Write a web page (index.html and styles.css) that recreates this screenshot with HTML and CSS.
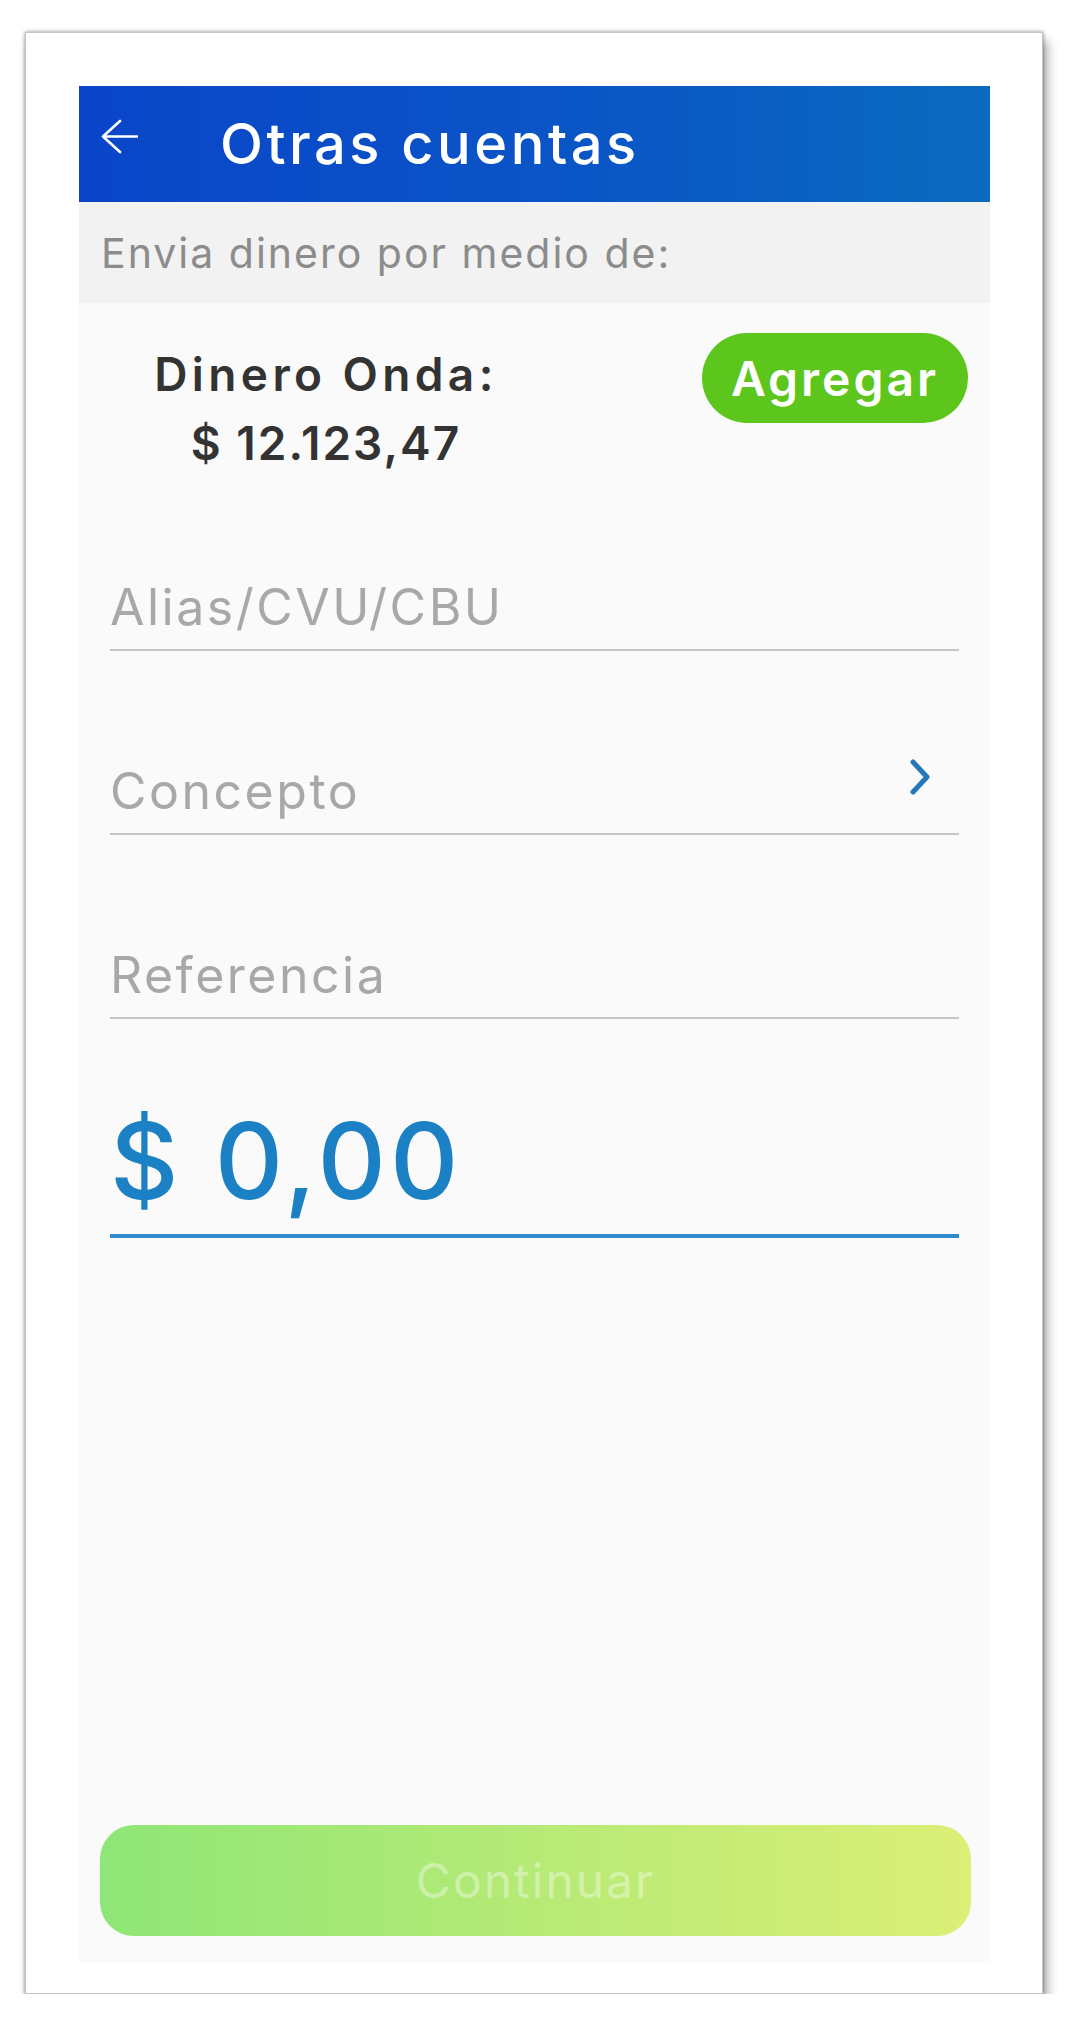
FILE: index.html
```html
<!doctype html>
<html>
<head>
    <meta charset="UTF-8">
    <title>Otras cuentas</title>
    <link rel="stylesheet" href="styles.css">
</head>

<body>
<div class="card">
    <div class="screen">
        <div class="topbar">
            <svg class="back" width="38" height="38" viewBox="0 0 38 38">
                <path d="M37 18.5 H3 M20 3 L3 18.5 L20 34" fill="none" stroke="#fff" stroke-width="2.6" stroke-linecap="round" stroke-linejoin="round"/>
            </svg>
            <h1 class="title">Otras cuentas</h1>
        </div>

        <div class="subtitle">Envia dinero por medio de:</div>

        <div class="balance-row">
            <div class="balance">
                <div class="balance-label">Dinero Onda:</div>
                <div class="balance-value">$ 12.123,47</div>
            </div>
            <button class="add" type="button">Agregar</button>
        </div>

        <div class="field">
            <span class="placeholder">Alias/CVU/CBU</span>
        </div>
        <div class="field">
            <span class="placeholder">Concepto</span>
            <svg class="chevron" width="24" height="38" viewBox="0 0 24 38">
                <path d="M5 4 L19 19 L5 34" fill="none" stroke="#2478b9" stroke-width="5" stroke-linecap="round" stroke-linejoin="round"/>
            </svg>
        </div>
        <div class="field">
            <span class="placeholder">Referencia</span>
        </div>
        <div class="field amount">
            <span>$ 0,00</span>
        </div>

        <button class="continue" type="button" disabled>Continuar</button>
    </div>
</div>
</body>

</html>
```

FILE: styles.css
```css
body {
    margin: 0;
    background-color: #fff;
    font-family: "Inter", "Open Sans", sans-serif;
}
.card {
    box-sizing: border-box;
    width: 1018px;
    height: 1962px;
    margin: 32px 0 0 25px;
    padding: 53px 52px 30px 53px;
    border: 1px solid #c4c4c4;
    background-color: #fff;
    box-shadow: 0 0 4px rgba(0, 0, 0, .45), 5px 9px 10px rgba(0, 0, 0, .3);
}
.screen {
    display: flex;
    flex-direction: column;
    height: 1877px;
    background-color: #fafafa;
}
.topbar {
    display: flex;
    align-items: center;
    height: 116px;
    padding-inline-start: 21px;
    background: linear-gradient(to right, #0a45c9, #0a57c6 60%, #0a6bbf);
}
.back {
    margin-block-end: 14px;
}
.title {
    margin: 0 0 0 82px;
    color: #fff;
    font-size: 56px;
    font-weight: 500;
    letter-spacing: 3.5px;
}
.subtitle {
    display: flex;
    align-items: center;
    height: 101px;
    padding-inline-start: 22px;
    background-color: #f2f2f2;
    color: #8c8c8c;
    font-size: 41px;
    letter-spacing: 2px;
}
.balance-row {
    display: flex;
    align-items: flex-start;
    padding: 30px 22px 0 0;
}
.balance {
    width: 494px;
    padding-block-start: 7px;
    text-align: center;
    color: #333;
    font-size: 46px;
    font-weight: 600;
    line-height: 69px;
}
.balance-label {
    letter-spacing: 4.4px;
}
.balance-value {
    letter-spacing: 2px;
}
.add {
    margin-inline-start: auto;
    width: 266px;
    height: 90px;
    padding: 0;
    border: none;
    border-radius: 45px;
    background-color: #5cc61c;
    color: #fff;
    font-family: inherit;
    font-size: 48px;
    font-weight: 600;
    letter-spacing: 3px;
}
.field {
    display: flex;
    align-items: flex-start;
    margin: 110px 31px 0;
    padding-block-end: 12px;
    border-block-end: 2px solid #c6c6c6;
    color: #a8a8a8;
    font-size: 50px;
    line-height: 60px;
    letter-spacing: 2.5px;
}
.balance-row + .field {
    margin-block-start: 99px;
}
.chevron {
    margin: -3px 27px 0 auto;
}
.field.amount {
    margin-block-start: 89px;
    padding-block-end: 20px;
    border-block-end: 4px solid #2f8bc9;
    color: #1b80c4;
    font-size: 106px;
    font-weight: 500;
    line-height: 106px;
    letter-spacing: 4px;
}
.continue {
    margin: auto 19px 27px 21px;
    height: 111px;
    border: none;
    border-radius: 34px;
    background: linear-gradient(to right, #8ee676, #b6ea76 50%, #dcef76);
    color: rgba(255, 255, 255, .38);
    font-family: inherit;
    font-size: 48px;
    letter-spacing: 2px;
}
```
